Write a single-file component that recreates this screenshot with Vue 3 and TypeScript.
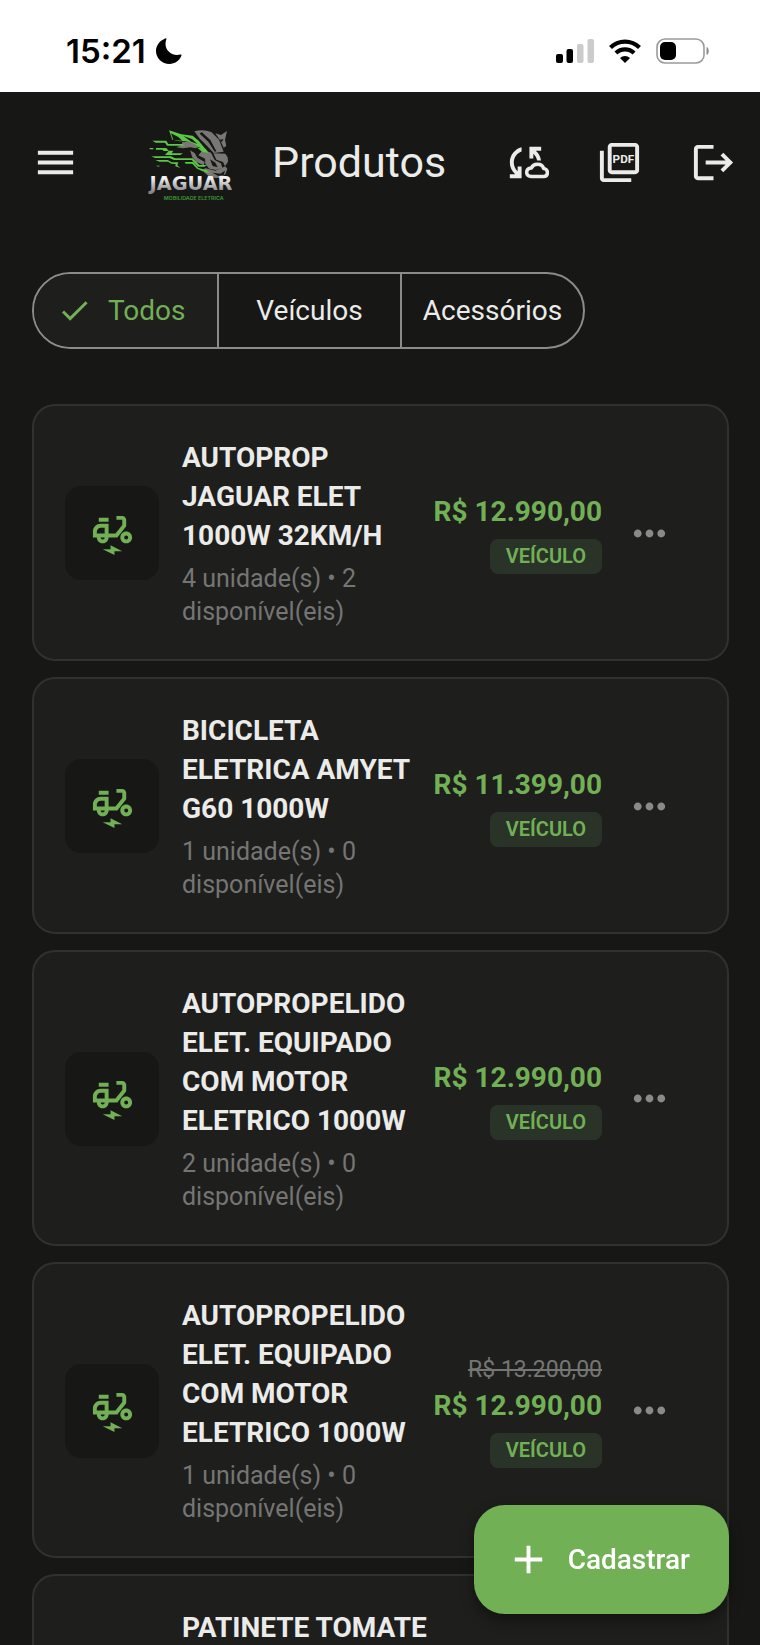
<script setup lang="ts">
import { ref } from 'vue'

interface Product {
  id: number
  name: string
  stock?: string
  oldPrice?: string
  price?: string
  category?: string
}

const filters = ['Todos', 'Veículos', 'Acessórios']
const activeFilter = ref('Todos')

const products: Product[] = [
  { id: 1, name: 'AUTOPROP JAGUAR ELET 1000W 32KM/H', stock: '4 unidade(s) • 2 disponível(eis)', price: 'R$ 12.990,00', category: 'VEÍCULO' },
  { id: 2, name: 'BICICLETA ELETRICA AMYET G60 1000W', stock: '1 unidade(s) • 0 disponível(eis)', price: 'R$ 11.399,00', category: 'VEÍCULO' },
  { id: 3, name: 'AUTOPROPELIDO ELET. EQUIPADO COM MOTOR ELETRICO 1000W', stock: '2 unidade(s) • 0 disponível(eis)', price: 'R$ 12.990,00', category: 'VEÍCULO' },
  { id: 4, name: 'AUTOPROPELIDO ELET. EQUIPADO COM MOTOR ELETRICO 1000W', stock: '1 unidade(s) • 0 disponível(eis)', oldPrice: 'R$ 13.200,00', price: 'R$ 12.990,00', category: 'VEÍCULO' },
  { id: 5, name: 'PATINETE TOMATE' },
]
</script>

<template>
  <div class="app">
    <div class="status">
      <span class="time">15:21</span>
      <svg class="moon" viewBox="0 0 26 26" aria-hidden="true">
        <path d="M9.3.4C9.9 0 10.7.5 10.4 1.300 8.900 5 9.300 9.800 12.200 13c3.200 3.600 7.800 4.700 12.100 3.500.9-.3 1.500.5 1.100 1.300C23.400 22.800 18.700 26 13.500 26 6 26 0 20.300 0 13 0 7.300 3.700 2.400 9.300.4z" />
      </svg>
      <div class="indicators">
        <svg class="signal" viewBox="0 0 38 24" aria-hidden="true">
          <rect x="0" y="15" width="7" height="9" rx="2" />
          <rect x="10.500" y="10" width="6.500" height="14" rx="2" />
          <rect x="21" y="5" width="6.500" height="19" rx="2" fill="#cbcbcb" />
          <rect x="31.500" y="0" width="6.500" height="24" rx="2" fill="#cbcbcb" />
        </svg>
        <svg class="wifi" viewBox="0 0 32 24" aria-hidden="true">
          <path d="M1.500 8.600a20.600 20.600 0 0 1 29 0M6.900 14.100a13 13 0 0 1 18.200 0" fill="none" stroke="#000" stroke-width="4.200" />
          <path d="M16 24l-5-4.900a7.200 7.200 0 0 1 10 0z" />
        </svg>
        <svg class="battery" viewBox="0 0 54 26" aria-hidden="true">
          <rect x="1" y="1" width="47" height="24" rx="8" fill="none" stroke="#9b9b9b" stroke-width="1.600" />
          <rect x="4" y="4" width="16" height="18" rx="5" />
          <path d="M50.500 9c3 1 3 7 0 8z" fill="#8c8c8c" />
        </svg>
      </div>
    </div>

    <header class="bar">
      <button class="icon-btn menu" type="button" aria-label="Menu">
        <svg class="icon" viewBox="0 0 24 24"><path d="M3 18h18v-2H3v2zm0-5h18v-2H3v2zm0-7v2h18V6H3z" /></svg>
      </button>
      <svg class="logo" viewBox="45 29 279 225" role="img" aria-label="Jaguar Mobilidade Elétrica">
        <defs>
          <linearGradient id="steel" x1="0" y1="0" x2="0" y2="1">
            <stop offset="0.250" stop-color="#f2f2f2" />
            <stop offset="0.850" stop-color="#858585" />
          </linearGradient>
        </defs>
        <!-- forehead, ear and nose -->
        <path fill="#787773" d="M193 48c18-5 36-4 52 3l22 22 14 36-30 4-19-20-22-22z" />
        <path fill="#787773" d="M256 54l17 5 18-12-6 26 4 19-8 5-9-19z" />
        <path fill="#171715" d="M215 50l26 24 18 34-5 1-19-30-26-24zM268 74l12-3-4 9z" />
        <path fill="#787773" d="M250 114l36 1 7 11 1 13-9 14-6-13-20-7z" />
        <!-- muzzle and jaw -->
        <path fill="#787773" d="M219 103l24 9 11 22 19 10 4 14-19 6-20-4-12-14-1-16-20-10z" />
        <path fill="#171715" d="M240 132l16 10 7 14-15-4z" />
        <path fill="#787773" d="M224 158l32 8 30-13 6 8-6 16-19 11-25-1-20-16z" />
        <path fill="#171715" d="M247 172l24 3 14-9-4 13-16 3z" />
        <!-- cheek -->
        <path fill="#787773" d="M157 80l32-3 22 14-14 8-16-3-22 3-20-3 16-6z" />
        <path fill="#787773" d="M180 105l14 8 8 14 22 13-3 10-22-10-12-14z" />
        <!-- brow and ear in green -->
        <path fill="#5cc845" d="M117 45l37 12 34 4 18 15 16 20 11 12-8 3-18-16-24-14-18-4-14 1-24-5z" />
        <path fill="#171715" d="M123 54l22 11 12 11-27-2zM160 62l26 9 16 15-18-7z" />
        <path fill="#5cc845" d="M200 96l26 5 10 12-20-4z" />
        <!-- speed streaks -->
        <path fill="#5cc845" d="M67 76h42l6 10h42l8 5h-54l-6-9H77zM59 98h11v4H59zM78 98h31l7 8h14l-5 8h34l-8 5h-46l11-12h-15l-4-4H78zM64 123h59l12 6h53l20 20h23l-8 5h-19l-19-20h-53l-13-6H75zM76 134h37l12 7h20l-3 9 9 8-15-5 1-7-13-1-10-6H88zM77 151h13l-4 3zM164 140h26l15 18 22 5 15 11-24-6-17-8-14-15h-20z" />
        <text class="logo-name" x="183" y="225" text-anchor="middle" fill="url(#steel)">JAGUAR</text>
        <text class="logo-tag" x="191" y="254" text-anchor="middle" fill="#3d9a35">MOBILIDADE ELETRICA</text>
      </svg>
      <h1>Produtos</h1>
      <div class="actions">
        <button class="icon-btn" type="button" aria-label="Sincronizar">
          <svg class="icon" viewBox="0 0 24 24">
            <path d="M10 4.260v2.090C7.670 7.180 6 9.390 6 12c0 1.770.780 3.340 2 4.440V14h2v6H4v-2h2.730C5.060 16.540 4 14.400 4 12c0-3.730 2.550-6.850 6-7.740zM20 6h-2.730c1.430 1.260 2.410 3.010 2.660 5h-2.020c-.230-1.360-.930-2.550-1.910-3.440V10h-2V4h6v2z" />
            <path d="M21.200 15.100C20.900 13.300 19.500 12.900 18 12.900c-1.400 0-2.500.7-3 1.900-1.600.1-2.400 1.100-2.400 2.300 0 1.200 1 2 2.300 2h6.500c1.100 0 1.800-.8 1.800-2s-.9-2-2-2z" fill="none" stroke="#ebebe9" stroke-width="1.800" stroke-linejoin="round" />
          </svg>
        </button>
        <button class="icon-btn" type="button" aria-label="Exportar PDF">
          <svg class="icon" viewBox="0 0 24 24">
            <path d="M4 6H2v14c0 1.100.9 2 2 2h14v-2H4V6zm16-4H8c-1.100 0-2 .9-2 2v12c0 1.100.9 2 2 2h12c1.100 0 2-.9 2-2V4c0-1.100-.9-2-2-2zm0 14H8V4h12v12z" />
            <text class="pdf" x="14" y="12.500" text-anchor="middle">PDF</text>
          </svg>
        </button>
        <button class="icon-btn" type="button" aria-label="Sair">
          <svg class="icon" viewBox="0 0 24 24"><path d="M17 7l-1.410 1.410L18.170 11H8v2h10.170l-2.580 2.580L17 17l5-5zM4 5h8V3H4c-1.100 0-2 .9-2 2v14c0 1.100.9 2 2 2h8v-2H4V5z" /></svg>
        </button>
      </div>
    </header>

    <main class="content">
      <div class="segments" role="group" aria-label="Categoria">
        <button
          v-for="f in filters"
          :key="f"
          type="button"
          class="segment"
          :class="{ active: f === activeFilter }"
          :aria-pressed="f === activeFilter"
          @click="activeFilter = f"
        >
          <svg v-if="f === activeFilter" class="check" viewBox="0 0 24 24"><path d="M9 16.170L4.830 12l-1.420 1.410L9 19 21 7l-1.410-1.410z" /></svg>
          {{ f }}
        </button>
      </div>

      <ul class="list">
        <li v-for="p in products" :key="p.id" class="card">
          <div class="tile">
            <svg class="icon" viewBox="0 0 24 24" aria-hidden="true">
              <path d="M19 5c0-1.100-.9-2-2-2h-3v2h3v2.650L13.520 12H10V7H6c-2.210 0-4 1.790-4 4v3h2c0 1.660 1.340 3 3 3s3-1.340 3-3h4.480L19 8.350V5zM4 12v-1c0-1.100.9-2 2-2h2v3H4zm3 3c-.550 0-1-.450-1-1h2c0 .550-.450 1-1 1z" />
              <path d="M5 4h5v2H5zM19 11c-1.660 0-3 1.340-3 3s1.340 3 3 3 3-1.340 3-3-1.340-3-3-3zm0 4c-.550 0-1-.450-1-1s.450-1 1-1 1 .450 1 1-.450 1-1 1zM7 20h4v-2l6 3h-4v2z" />
            </svg>
          </div>
          <div class="info">
            <h2>{{ p.name }}</h2>
            <p v-if="p.stock">{{ p.stock }}</p>
          </div>
          <div class="pricing">
            <s v-if="p.oldPrice">{{ p.oldPrice }}</s>
            <strong v-if="p.price">{{ p.price }}</strong>
            <span v-if="p.category" class="badge">{{ p.category }}</span>
          </div>
          <button class="icon-btn more" type="button" aria-label="Mais opções">
            <svg class="icon" viewBox="0 0 24 24"><path d="M6 10c-1.100 0-2 .9-2 2s.9 2 2 2 2-.9 2-2-.9-2-2-2zm12 0c-1.100 0-2 .9-2 2s.9 2 2 2 2-.9 2-2-.9-2-2-2zm-6 0c-1.100 0-2 .9-2 2s.9 2 2 2 2-.9 2-2-.9-2-2-2z" /></svg>
          </button>
        </li>
      </ul>
    </main>

    <button class="fab" type="button">
      <svg class="icon" viewBox="0 0 24 24" aria-hidden="true"><path d="M19 13h-6v6h-2v-6H5v-2h6V5h2v6h6v2z" /></svg>
      Cadastrar
    </button>
  </div>
</template>

<style>
body {
  margin: 0;
  background: #171715;
}
</style>

<style scoped>
.app {
  display: flex;
  flex-direction: column;
  height: 100vh;
  overflow: hidden;
  background: #171715;
  color: #ebebe9;
  font-family: Roboto, "Liberation Sans", sans-serif;
  font-size: 28px;
}
button {
  margin: 0;
  padding: 0;
  border: 0;
  background: none;
  color: inherit;
  font: inherit;
  cursor: pointer;
}
.icon {
  display: block;
  width: 47px;
  height: 47px;
  fill: currentColor;
}
.status {
  display: flex;
  flex: none;
  align-items: center;
  box-sizing: border-box;
  height: 92px;
  padding: 10px 50px 0 66px;
  background: #fff;
  color: #000;
}
.time {
  font: 600 33px/40px Inter, sans-serif;
}
.moon {
  width: 26px;
  height: 26px;
  margin-left: 10px;
}
.indicators {
  display: flex;
  align-items: center;
  gap: 15px;
  margin-left: auto;
}
.signal {
  width: 38px;
  height: 24px;
}
.wifi {
  width: 32px;
  height: 24px;
}
.battery {
  width: 54px;
  height: 26px;
}
.bar {
  display: flex;
  flex: none;
  align-items: center;
  height: 140px;
  padding-left: 8px;
}
.icon-btn {
  display: flex;
  flex: none;
  align-items: center;
  justify-content: center;
  width: 94px;
  height: 94px;
}
.logo {
  flex: none;
  width: 93px;
  height: 75px;
  margin: 0 34px 0 43px;
  overflow: visible;
}
.logo-name {
  font: bold 58px "DejaVu Sans", sans-serif;
}
.logo-tag {
  font: 600 16px Inter, sans-serif;
}
.pdf {
  font: 700 6px Roboto, sans-serif;
}
h1 {
  margin: 0;
  font-size: 43px;
  font-weight: 400;
  line-height: 52px;
}
.actions {
  display: flex;
  margin-left: auto;
}
.content {
  flex: 1;
  min-height: 0;
  padding: 40px 31px 0 32px;
  overflow-y: auto;
  scrollbar-width: none;
}
.segments {
  display: inline-grid;
  grid-template-columns: repeat(3, 1fr);
  box-sizing: border-box;
  height: 77px;
  overflow: hidden;
  border: 2px solid #8c8c86;
  border-radius: 39px;
}
.segment {
  display: flex;
  align-items: center;
  justify-content: center;
  gap: 16px;
  box-sizing: border-box;
  min-width: 183px;
  padding: 0 20px;
  white-space: nowrap;
}
.segment + .segment {
  border-left: 2px solid #8c8c86;
}
.segment.active {
  justify-content: flex-start;
  padding: 0 23px;
  background: #1e1e1c;
  color: #72b056;
}
.check {
  width: 35px;
  height: 35px;
  fill: currentColor;
}
.list {
  display: flex;
  flex-direction: column;
  gap: 16px;
  margin: 55px 0 0;
  padding: 0 0 140px;
  list-style: none;
}
.card {
  display: flex;
  align-items: center;
  box-sizing: border-box;
  min-height: 257px;
  padding: 32px 31px 31px;
  border: 2px solid #31312f;
  border-radius: 23px;
  background: #1e1e1d;
}
.tile {
  display: flex;
  flex: none;
  align-items: center;
  justify-content: center;
  width: 94px;
  height: 94px;
  border-radius: 16px;
  background: #171715;
  color: #72b056;
}
.info {
  flex: 1;
  align-self: flex-start;
  min-width: 0;
  margin: 0 15px 0 23px;
}
h2 {
  margin: 0;
  font-size: 28px;
  font-weight: 700;
  line-height: 39px;
}
p {
  margin: 7px 0 0;
  color: #757573;
  font-size: 25px;
  line-height: 33px;
}
.pricing {
  display: flex;
  flex: none;
  flex-direction: column;
  align-items: flex-end;
}
.pricing s {
  color: #757573;
  font-size: 23px;
  line-height: 32px;
}
.pricing strong {
  color: #72b056;
  font-size: 28px;
  font-weight: 700;
  line-height: 39px;
}
.badge {
  margin-top: 8px;
  padding: 0 16px;
  border-radius: 8px;
  background: #2a3327;
  color: #72b056;
  font-size: 20px;
  font-weight: 600;
  line-height: 35px;
}
.more {
  color: #8a8a88;
}
.fab {
  position: fixed;
  right: 31px;
  bottom: 31px;
  display: flex;
  align-items: center;
  gap: 16px;
  height: 109px;
  padding: 0 39px 0 31px;
  border-radius: 31px;
  background: #72b056;
  box-shadow: 0 6px 14px rgba(0, 0, 0, 0.4);
  color: #fff;
  font-weight: 500;
}
</style>
